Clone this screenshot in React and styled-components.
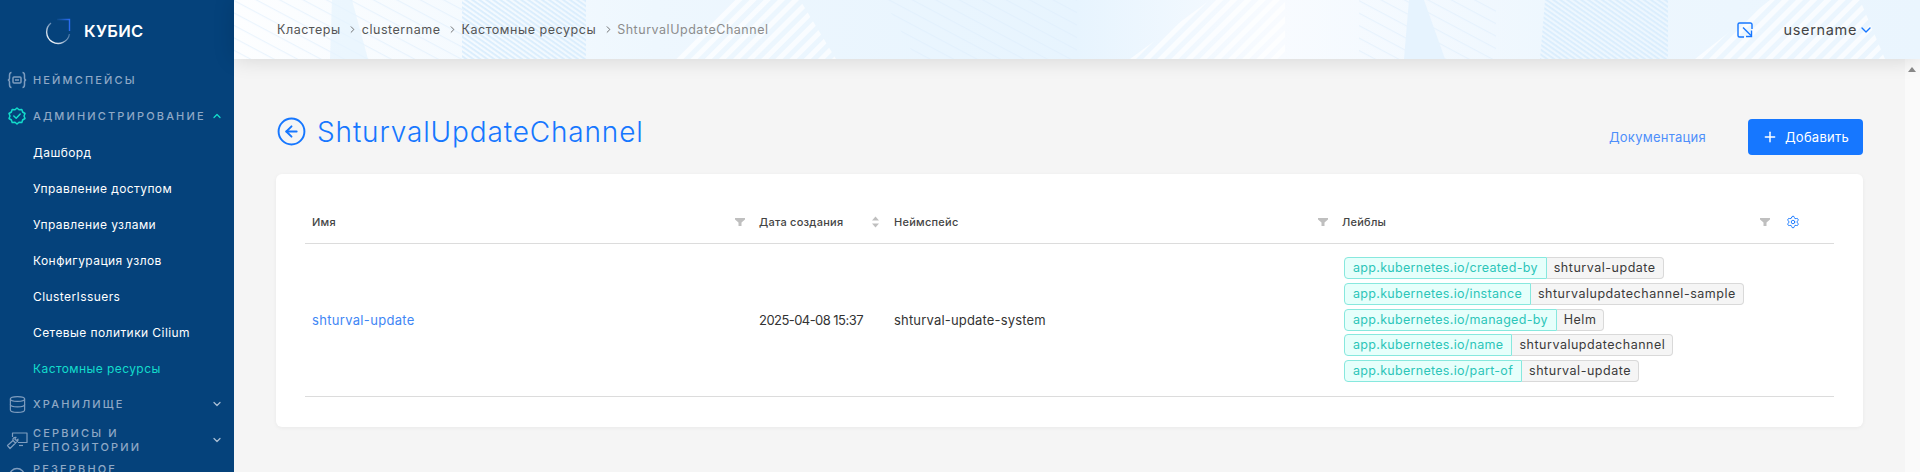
import styled, { createGlobalStyle } from "styled-components";
import { ChevronDown, ChevronRight, ChevronUp, CircleArrowLeft, Database, Plus, Settings } from "lucide-react";

const GlobalStyle = createGlobalStyle`
	html, body {
		margin: 0;
		height: 100%;
		overflow: hidden;
		background: #f5f5f5;
		font-family: Inter, "Noto Sans", sans-serif;
	}
	#root {
		height: 100%;
	}
	* {
		box-sizing: border-box;
	}
`;

const Page = styled.div`
	display: flex;
	height: 472px;
	overflow: hidden;
`;

const Sidebar = styled.aside`
	flex: 0 0 234px;
	height: 100%;
	overflow: hidden;
	background: #05427b;
`;

const Logo = styled.div`
	display: flex;
	align-items: center;
	gap: 12px;
	height: 62px;
	padding: 0 0 0 44px;
	color: white;
	font-size: 16.5px;
	font-weight: 600;
	letter-spacing: 0.3px;
`;

const Group = styled.div`
	display: flex;
	align-items: center;
	height: 36px;
	padding-right: 11px;
	color: #8fa9c6;
`;

const GroupIcon = styled.span`
	display: flex;
	justify-content: center;
	flex: 0 0 33px;
	padding-left: 1px;
	color: ${props => props.$active ? "#13dccb" : "#7f9dbf"};
`;

const GroupLabel = styled.span`
	flex: 1;
	font-size: 11px;
	font-weight: 500;
	line-height: 14px;
	letter-spacing: 2.15px;
`;

const GroupChevron = styled.span`
	display: flex;
	color: ${props => props.$active ? "#13dccb" : "#a9bdd4"};
`;

const SubItem = styled.div`
	display: flex;
	align-items: center;
	height: 36px;
	padding-left: 33px;
	color: ${props => props.$active ? "#13dccb" : "white"};
	font-size: 12px;
	letter-spacing: 0.42px;
`;

const Right = styled.div`
	display: flex;
	flex-direction: column;
	flex: 1;
	min-width: 0;
`;

const Header = styled.header`
	position: relative;
	z-index: 1;
	display: flex;
	align-items: center;
	justify-content: space-between;
	flex: 0 0 59px;
	padding: 0 46px 0 43px;
	overflow: hidden;
	background: linear-gradient(to right, #fdfeff 0, #eef7fe 25%, #e7f4fe 50%, #f8fbff 62%, #eef7fe 78%, #eaf5fe 100%);
	box-shadow: 0 0 22px rgba(0, 0, 0, 0.14);
`;

const Pattern = styled.svg`
	position: absolute;
	top: 0;
	left: 0;
	width: 1686px;
	height: 59px;
`;

const Crumbs = styled.nav`
	position: relative;
	display: flex;
	align-items: center;
	font-size: 12.5px;
	letter-spacing: 0.53px;
	color: #555;
`;

const Crumb = styled.span`
	color: ${props => props.$current ? "#8c8c8c" : "#555"};
`;

const CrumbSep = styled.span`
	display: flex;
	justify-content: center;
	width: 21px;
	padding-left: 3px;
	color: #555;
`;

const UserBar = styled.div`
	position: relative;
	display: flex;
	align-items: center;
	color: #444;
	font-size: 14.5px;
	letter-spacing: 0.65px;
`;

const ExpandIcon = styled.svg`
	margin-right: 31px;
`;

const UserChevron = styled.span`
	display: flex;
	margin-left: 1px;
	color: #1677ff;
`;

const Body = styled.div`
	display: flex;
	flex: 1;
	min-height: 0;
`;

const Main = styled.main`
	flex: 1;
	min-width: 0;
	padding: 60px 42px 0;
	background: #f5f5f5;
`;

const ScrollTrack = styled.div`
	flex: 0 0 15px;
	padding: 8px 0 0 3px;
	background: #fafafa;
`;

const ScrollArrow = styled.div`
	width: 0;
	height: 0;
	border-left: 4.5px solid transparent;
	border-right: 4.5px solid transparent;
	border-bottom: 5px solid #8a8a8a;
`;

const TitleRow = styled.div`
	display: flex;
	align-items: center;
	height: 36px;
	margin-bottom: 19px;
`;

const TitleBlock = styled.div`
	display: flex;
	align-items: center;
	flex: 1;
	padding-bottom: 11px;
`;

const BackIcon = styled.span`
	display: flex;
	margin-right: 10px;
	color: #1677ff;
`;

const Title = styled.h1`
	margin: 0;
	color: #1677ff;
	font-size: 28px;
	font-weight: 300;
	line-height: 36px;
	letter-spacing: 0.85px;
`;

const DocLink = styled.a`
	margin-right: 42px;
	color: #4e8ffb;
	font-size: 13px;
	letter-spacing: 0.25px;
`;

const AddButton = styled.button`
	display: flex;
	align-items: center;
	justify-content: center;
	gap: 7px;
	width: 115px;
	height: 36px;
	padding: 0;
	border: none;
	border-radius: 4px;
	background: #1677ff;
	color: white;
	font-family: inherit;
	font-size: 13px;
	letter-spacing: 0.28px;
`;

const Card = styled.section`
	padding: 27px 29px 30px;
	border-radius: 6px;
	background: white;
	box-shadow: 0 1px 4px rgba(0, 0, 0, 0.05);
`;

const Table = styled.table`
	width: 100%;
	border-collapse: collapse;
	table-layout: fixed;
`;

const Th = styled.th`
	position: relative;
	width: ${props => props.$width};
	height: 42px;
	padding: 0 7px;
	border-bottom: 1px solid #dcdcdc;
	color: #444;
	font-size: 11px;
	font-weight: 450;
	letter-spacing: 0.25px;
	text-align: left;
`;

const ThInner = styled.div`
	display: flex;
	align-items: center;
	justify-content: space-between;
`;

const ThTools = styled.span`
	display: flex;
	align-items: center;
	gap: 16px;
	margin-right: ${props => props.$offset || "0"};
`;

const Td = styled.td`
	height: 153px;
	padding: 0 7px;
	border-bottom: 1px solid #dcdcdc;
	color: #333;
	font-size: 13px;
	letter-spacing: 0.18px;
`;

const NameLink = styled.a`
	color: #3f86f5;
	letter-spacing: 0.32px;
`;

const DateText = styled.span`
	letter-spacing: -0.55px;
`;

const Labels = styled.div`
	display: flex;
	flex-direction: column;
	align-items: flex-start;
	gap: 3.6px;
	margin-left: 2px;
`;

const Label = styled.div`
	display: flex;
	height: 22px;
	font-size: 12.5px;
	line-height: 20px;
`;

const LabelKey = styled.span`
	padding: 0 8px;
	border: 1px solid #87e8de;
	border-radius: 4px 0 0 4px;
	background: #e6fffb;
	color: #2cc5b9;
	letter-spacing: 0.3px;
`;

const LabelValue = styled.span`
	padding: 0 7px;
	border: 1px solid #d9d9d9;
	border-left: none;
	border-radius: 0 4px 4px 0;
	background: #f5f5f5;
	color: #3a3a3a;
	letter-spacing: 0.52px;
`;

const LogoMark = () => (
	<svg width="28" height="28" viewBox="0 0 28 28" fill="none">
		<defs>
			<linearGradient id="ring" x1="0.1" y1="0.9" x2="0.9" y2="0.1">
				<stop offset="0" stopColor="#ffffff" />
				<stop offset="0.5" stopColor="#7f9ec0" />
				<stop offset="1" stopColor="#0b4a86" />
			</linearGradient>
			<linearGradient id="corner" x1="0" y1="0" x2="1" y2="0">
				<stop offset="0" stopColor="#0b4a86" />
				<stop offset="1" stopColor="#2a6cf0" />
			</linearGradient>
		</defs>
		<path d="M7 6A11.5 11.5 0 1 0 25.5 17" stroke="url(#ring)" strokeWidth="1.4" />
		<path d="M13 2.5H25.5V14" stroke="url(#corner)" strokeWidth="1.4" />
	</svg>
);

const NamespaceIcon = () => (
	<svg width="20" height="18" viewBox="0 0 20 18" fill="none" stroke="currentColor" strokeWidth="1.5">
		<path d="M4.5 1.5C2.5 1.5 2.5 3 2.5 4.5V7C2.5 8 1.8 9 .8 9C1.8 9 2.5 10 2.5 11V13.5C2.5 15 2.5 16.5 4.5 16.5" />
		<path d="M15.5 1.5C17.5 1.5 17.5 3 17.5 4.5V7C17.5 8 18.2 9 19.2 9C18.2 9 17.5 10 17.5 11V13.5C17.5 15 17.5 16.5 15.5 16.5" />
		<rect x="6" y="6" width="8" height="6" rx="1" />
		<path d="M8 9H12" />
	</svg>
);

const AdminIcon = () => (
	<svg width="18" height="18" viewBox="0 0 18 18" fill="none" stroke="currentColor" strokeWidth="1.5" strokeLinejoin="round" strokeLinecap="round">
		<path d="M9 1L11 2.8L13.8 2.4L14.6 5L17 6.5L16 9L17 11.5L14.6 13L13.8 15.6L11 15.2L9 17L7 15.2L4.2 15.6L3.4 13L1 11.5L2 9L1 6.5L3.4 5L4.2 2.4L7 2.8Z" />
		<path d="M5.8 9L8.2 11.2L12.2 7" />
	</svg>
);

const ServicesIcon = () => (
	<svg width="22" height="20" viewBox="0 0 22 20" fill="none" stroke="currentColor" strokeWidth="1.2" strokeLinejoin="round">
		<path d="M6.5 7V3H21V12.5H12" />
		<path d="M13 15.5H17" />
		<path d="M1.5 15.5L7 10.5L9.5 13L4 18.5Z" />
		<path d="M7 10.5C6.5 8.5 8 7 10 7.3L8.8 9L10.2 10.4L12 9.2C12.2 11.2 10.8 12.6 9 12.5" />
	</svg>
);

const BackupIcon = () => (
	<svg width="18" height="18" viewBox="0 0 18 18" fill="none" stroke="currentColor" strokeWidth="1.5">
		<circle cx="9" cy="9" r="7.5" />
	</svg>
);

const ExpandGlyph = () => (
	<ExpandIcon width="16" height="16" viewBox="0 0 16 16" fill="none" stroke="#1677ff" strokeWidth="1.4">
		<path d="M15 7V2.5A1.5 1.5 0 0 0 13.5 1H2.5A1.5 1.5 0 0 0 1 2.5V13.5A1.5 1.5 0 0 0 2.5 15H7" />
		<path d="M6 5.5L14 13.5" />
		<path d="M14.5 8.5V14.5H9" />
	</ExpandIcon>
);

const FilterIcon = () => (
	<svg width="10" height="10" viewBox="0 0 10 10" fill="#bfbfbf">
		<path d="M0 1H10V2.6L6.5 5.4V9H3.5V5.4L0 2.6Z" />
	</svg>
);

const SortIcon = () => (
	<svg width="9" height="12" viewBox="0 0 9 12" fill="#bfbfbf">
		<path d="M4.5 0.5L8 4.5H1Z" />
		<path d="M4.5 11.5L8 7.5H1Z" />
	</svg>
);

// rough copy of the header's light hatching, x is in page coordinates
const HeaderPattern = () => (
	<Pattern viewBox="234 0 1686 59" preserveAspectRatio="none">
		<defs>
			<pattern id="dense" width="4" height="4" patternUnits="userSpaceOnUse" patternTransform="rotate(35)">
				<rect width="4" height="1.8" fill="#d9edfd" />
			</pattern>
			<pattern id="wide" width="10" height="10" patternUnits="userSpaceOnUse" patternTransform="rotate(-45)">
				<rect width="10" height="5" fill="#ffffff" fillOpacity="0.7" />
			</pattern>
			<pattern id="chevron" width="11" height="11" patternUnits="userSpaceOnUse" patternTransform="rotate(28)">
				<rect width="11" height="1.2" fill="#dcedfb" fillOpacity="0.55" />
			</pattern>
		</defs>
		<rect x="234" y="0" width="230" height="59" fill="url(#chevron)" />
		<polygon points="332,0 352,0 368,59 330,59" fill="#e6f3fe" fillOpacity="0.7" />
		<polygon points="462,0 586,0 586,59 462,59" fill="url(#dense)" />
		<polygon points="730,0 800,0 836,59 675,59" fill="url(#wide)" />
		<polygon points="884,0 1077,0 1077,59 916,59" fill="url(#chevron)" />
		<polygon points="1210,0 1285,0 1285,59 1130,59" fill="url(#wide)" />
		<polygon points="1359,0 1496,0 1496,59 1359,59" fill="url(#chevron)" />
		<polygon points="1409,0 1424,0 1445,59 1404,59" fill="#e6f3fe" />
		<polygon points="1545,0 1668,0 1668,59 1540,59" fill="url(#dense)" />
		<polygon points="1770,0 1860,0 1885,59 1695,59" fill="url(#wide)" />
	</Pattern>
);

const groupsAfter = [
	{ label: "Хранилище", icon: <Database size={19} strokeWidth={1.5} /> },
	{ label: "Сервисы и репозитории", icon: <ServicesIcon /> },
	{ label: "Резервное копирование", icon: <BackupIcon /> },
];

const subItems = [
	"Дашборд",
	"Управление доступом",
	"Управление узлами",
	"Конфигурация узлов",
	"ClusterIssuers",
	"Сетевые политики Cilium",
];

const crumbs = ["Кластеры", "clustername", "Кастомные ресурсы"];

const labels = [
	["app.kubernetes.io/created-by", "shturval-update"],
	["app.kubernetes.io/instance", "shturvalupdatechannel-sample"],
	["app.kubernetes.io/managed-by", "Helm"],
	["app.kubernetes.io/name", "shturvalupdatechannel"],
	["app.kubernetes.io/part-of", "shturval-update"],
];

const App = () => {
	return (
		<Page>
			<GlobalStyle />
			<Sidebar>
				<Logo>
					<LogoMark />
					<span>КУБИС</span>
				</Logo>
				<Group>
					<GroupIcon><NamespaceIcon /></GroupIcon>
					<GroupLabel>НЕЙМСПЕЙСЫ</GroupLabel>
				</Group>
				<Group>
					<GroupIcon $active><AdminIcon /></GroupIcon>
					<GroupLabel>АДМИНИСТРИРОВАНИЕ</GroupLabel>
					<GroupChevron $active><ChevronUp size={12} strokeWidth={2.5} /></GroupChevron>
				</Group>
				{subItems.map(item => <SubItem key={item}>{item}</SubItem>)}
				<SubItem $active>Кастомные ресурсы</SubItem>
				{groupsAfter.map(group => (
					<Group key={group.label}>
						<GroupIcon>{group.icon}</GroupIcon>
						<GroupLabel>{group.label.toUpperCase()}</GroupLabel>
						<GroupChevron><ChevronDown size={12} strokeWidth={2.5} /></GroupChevron>
					</Group>
				))}
			</Sidebar>
			<Right>
				<Header>
					<HeaderPattern />
					<Crumbs>
						{crumbs.flatMap(crumb => [
							<Crumb key={crumb}>{crumb}</Crumb>,
							<CrumbSep key={crumb + "-sep"}><ChevronRight size={11} strokeWidth={1.8} /></CrumbSep>,
						])}
						<Crumb $current>ShturvalUpdateChannel</Crumb>
					</Crumbs>
					<UserBar>
						<ExpandGlyph />
						<span>username</span>
						<UserChevron><ChevronDown size={16} strokeWidth={2} /></UserChevron>
					</UserBar>
				</Header>
				<Body>
					<Main>
						<TitleRow>
							<TitleBlock>
								<BackIcon><CircleArrowLeft size={31} strokeWidth={1.5} /></BackIcon>
								<Title>ShturvalUpdateChannel</Title>
							</TitleBlock>
							<DocLink>Документация</DocLink>
							<AddButton><Plus size={16} strokeWidth={2.2} />Добавить</AddButton>
						</TitleRow>
						<Card>
							<Table>
								<thead>
									<tr>
										<Th $width="447px">
											<ThInner>Имя<FilterIcon /></ThInner>
										</Th>
										<Th $width="135px">
											<ThInner>Дата создания<SortIcon /></ThInner>
										</Th>
										<Th $width="448px">
											<ThInner>Неймспейс<FilterIcon /></ThInner>
										</Th>
										<Th>
											<ThInner>
												Лейблы
												<ThTools $offset="27px">
													<FilterIcon />
													<Settings size={14} color="#1677ff" strokeWidth={1.6} />
												</ThTools>
											</ThInner>
										</Th>
									</tr>
								</thead>
								<tbody>
									<tr>
										<Td><NameLink>shturval-update</NameLink></Td>
										<Td><DateText>2025-04-08 15:37</DateText></Td>
										<Td>shturval-update-system</Td>
										<Td>
											<Labels>
												{labels.map(([key, value]) => (
													<Label key={key}>
														<LabelKey>{key}</LabelKey>
														<LabelValue>{value}</LabelValue>
													</Label>
												))}
											</Labels>
										</Td>
									</tr>
								</tbody>
							</Table>
						</Card>
					</Main>
					<ScrollTrack><ScrollArrow /></ScrollTrack>
				</Body>
			</Right>
		</Page>
	);
}

export default App;
